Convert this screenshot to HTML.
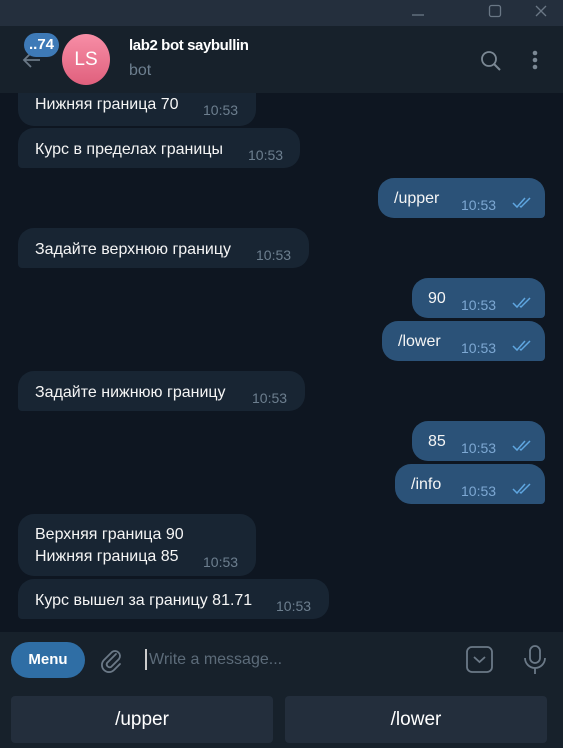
<!DOCTYPE html>
<html><head><meta charset="utf-8"><style>
*{margin:0;padding:0;box-sizing:border-box}
body{width:563px;height:748px;background:#0e1621;font-family:"Liberation Sans","DejaVu Sans",sans-serif;position:relative;overflow:hidden;color:#f5f5f5}
.a{position:absolute}
.b{position:absolute;background:#182533;border-radius:16px}
.b.in{border-bottom-left-radius:4px}
.b.out{background:#2b5278;border-bottom-right-radius:4px}
.t{position:absolute;font-size:16px;white-space:nowrap;color:#f5f5f5;margin-top:2px}
.tm{position:absolute;font-size:14px;color:#6d7f8f;margin-top:1px}
.out .tm{color:#7da8d3}
.ck{position:absolute;margin-top:1px}
</style></head><body>
<div class="b" style="left:18px;top:80px;width:238px;height:46px;border-radius:0 0 16px 16px"><div class="t" style="left:17px;top:14px">Нижняя граница 70</div><div class="tm" style="left:185px;top:21px">10:53</div></div>

<div class="a" style="left:0;top:0;width:563px;height:26px;background:#242f3d"></div>
<svg class="a" style="left:405px;top:0" width="158" height="26">
<line x1="7" y1="15" x2="19" y2="15" stroke="#6a7785" stroke-width="1.3"/>
<rect x="84.5" y="5.5" width="11" height="11" rx="2" fill="none" stroke="#6a7785" stroke-width="1.3"/>
<path d="M131 6 L141 16 M141 6 L131 16" stroke="#6a7785" stroke-width="1.3"/>
</svg>
<div class="a" style="left:0;top:26px;width:563px;height:67px;background:#17212b"></div>
<svg class="a" style="left:20px;top:48px" width="24" height="24"><path d="M20 12 H4 M11 5 L4 12 L11 19" stroke="#6b7987" stroke-width="1.8" fill="none"/></svg>
<div class="a" style="left:62px;top:34px;width:48px;height:51px;border-radius:50%;background:linear-gradient(#f78ea6,#e0607d);color:#fff;font-size:19px;line-height:51px;text-align:center">LS</div>
<div class="a" style="left:24px;top:33px;width:35px;height:24px;border-radius:12px;background:#3e7ab7;color:#fff;font-size:15px;line-height:24px;text-align:center;font-weight:bold">..74</div>
<div class="a" style="left:129px;top:37px;font-size:15px;font-weight:bold;color:#fff;letter-spacing:-0.4px">lab2 bot saybullin</div>
<div class="a" style="left:129px;top:62px;font-size:16px;color:#6d7f8f">bot</div>
<svg class="a" style="left:478px;top:48px" width="26" height="26"><circle cx="11" cy="11" r="7" stroke="#7b8894" stroke-width="1.8" fill="none"/><path d="M16 16 L22 22" stroke="#7b8894" stroke-width="2"/></svg>
<svg class="a" style="left:528px;top:49px" width="14" height="24"><circle cx="7" cy="4" r="2.3" fill="#7b8894"/><circle cx="7" cy="11" r="2.3" fill="#7b8894"/><circle cx="7" cy="18" r="2.3" fill="#7b8894"/></svg>

<div class="b in" style="left:18px;top:128px;width:282px;height:40px"><div class="t" style="left:17px;top:11px">Курс в пределах границы</div><div class="tm" style="left:230px;top:18px">10:53</div></div>

<div class="b out" style="left:378px;top:178px;width:167px;height:40px"><div class="t" style="left:16px;top:10px">/upper</div><div class="tm" style="left:83px;top:18px">10:53</div><svg class="ck" style="left:133px;top:17px" width="22" height="14"><path d="M2 7 L6 11 L14 2 M9 10 L10 11 L19 2" stroke="#5fa6e0" stroke-width="1.5" fill="none"/></svg></div>

<div class="b in" style="left:18px;top:228px;width:291px;height:40px"><div class="t" style="left:17px;top:11px">Задайте верхнюю границу</div><div class="tm" style="left:238px;top:18px">10:53</div></div>

<div class="b out" style="left:412px;top:278px;width:133px;height:40px"><div class="t" style="left:16px;top:10px">90</div><div class="tm" style="left:49px;top:18px">10:53</div><svg class="ck" style="left:99px;top:17px" width="22" height="14"><path d="M2 7 L6 11 L14 2 M9 10 L10 11 L19 2" stroke="#5fa6e0" stroke-width="1.5" fill="none"/></svg></div>

<div class="b out" style="left:382px;top:321px;width:163px;height:40px"><div class="t" style="left:16px;top:10px">/lower</div><div class="tm" style="left:79px;top:18px">10:53</div><svg class="ck" style="left:129px;top:17px" width="22" height="14"><path d="M2 7 L6 11 L14 2 M9 10 L10 11 L19 2" stroke="#5fa6e0" stroke-width="1.5" fill="none"/></svg></div>

<div class="b in" style="left:18px;top:371px;width:287px;height:40px"><div class="t" style="left:17px;top:11px">Задайте нижнюю границу</div><div class="tm" style="left:234px;top:18px">10:53</div></div>

<div class="b out" style="left:412px;top:421px;width:133px;height:40px"><div class="t" style="left:16px;top:10px">85</div><div class="tm" style="left:49px;top:18px">10:53</div><svg class="ck" style="left:99px;top:17px" width="22" height="14"><path d="M2 7 L6 11 L14 2 M9 10 L10 11 L19 2" stroke="#5fa6e0" stroke-width="1.5" fill="none"/></svg></div>

<div class="b out" style="left:395px;top:464px;width:150px;height:40px"><div class="t" style="left:16px;top:10px">/info</div><div class="tm" style="left:66px;top:18px">10:53</div><svg class="ck" style="left:116px;top:17px" width="22" height="14"><path d="M2 7 L6 11 L14 2 M9 10 L10 11 L19 2" stroke="#5fa6e0" stroke-width="1.5" fill="none"/></svg></div>

<div class="b" style="left:18px;top:514px;width:238px;height:62px"><div class="t" style="left:17px;top:10px">Верхняя граница 90</div><div class="t" style="left:17px;top:32px">Нижняя граница 85</div><div class="tm" style="left:185px;top:39px">10:53</div></div>

<div class="b in" style="left:18px;top:579px;width:311px;height:40px"><div class="t" style="left:17px;top:11px">Курс вышел за границу 81.71</div><div class="tm" style="left:258px;top:18px">10:53</div></div>

<div class="a" style="left:0;top:632px;width:563px;height:116px;background:#17212b"></div>
<div class="a" style="left:11px;top:642px;width:74px;height:36px;border-radius:18px;background:#2f6ea5;color:#fff;font-size:15px;font-weight:bold;line-height:36px;text-align:center">Menu</div>
<svg class="a" style="left:98px;top:646px" width="28" height="28"><path d="M18 8 L9 17 a3 3 0 0 0 4 4 L21 13 a5 5 0 0 0 -7 -7 L6 14 a7 7 0 0 0 10 10 L22 18" stroke="#6b7987" stroke-width="1.8" fill="none" stroke-linecap="round"/></svg>
<div class="a" style="left:145px;top:649px;width:1.5px;height:21px;background:#ccc"></div>
<div class="a" style="left:149px;top:651px;font-size:16px;color:#5c6b79">Write a message...</div>
<svg class="a" style="left:465px;top:645px" width="30" height="30"><rect x="2" y="2" width="25" height="25" rx="5" fill="none" stroke="#6b7987" stroke-width="1.8"/><path d="M9 12 L14.5 17 L20 12" stroke="#6b7987" stroke-width="1.8" fill="none"/></svg>
<svg class="a" style="left:520px;top:644px" width="30" height="32"><rect x="10" y="2" width="10" height="17" rx="5" fill="none" stroke="#6b7987" stroke-width="1.8"/><path d="M5 14 a10 10 0 0 0 20 0 M15 24 V30" stroke="#6b7987" stroke-width="1.8" fill="none"/></svg>
<div class="a" style="left:11px;top:696px;width:262px;height:47px;border-radius:4px;background:#232e3c;color:#fff;font-size:19px;line-height:47px;text-align:center">/upper</div>
<div class="a" style="left:285px;top:696px;width:262px;height:47px;border-radius:4px;background:#232e3c;color:#fff;font-size:19px;line-height:47px;text-align:center">/lower</div>
</body></html>
